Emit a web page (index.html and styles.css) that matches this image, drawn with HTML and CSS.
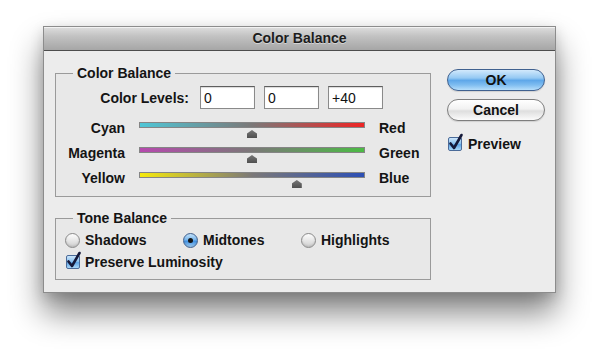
FILE: index.html
```html
<!DOCTYPE html>
<html lang="en">
<head>
    <meta charset="UTF-8">
    <title>Color Balance</title>
    <link rel="stylesheet" href="styles.css">
</head>
<body>

    <div class="page">
        <div class="dialog">
            <div class="titlebar">Color Balance</div>

            <div class="dialog-body">
                <div class="groups">
                    <fieldset class="group balance">
                        <legend>Color Balance</legend>

                        <div class="levels">
                            <span class="levels-label">Color Levels:</span>
                            <input class="level" type="text" value="0">
                            <input class="level" type="text" value="0">
                            <input class="level" type="text" value="+40">
                        </div>

                        <div class="sliders">
                            <span class="from">Cyan</span>
                            <div class="track cyan-red"><span class="thumb" style="left: 50%"></span></div>
                            <span class="to">Red</span>

                            <span class="from">Magenta</span>
                            <div class="track magenta-green"><span class="thumb" style="left: 50%"></span></div>
                            <span class="to">Green</span>

                            <span class="from">Yellow</span>
                            <div class="track yellow-blue"><span class="thumb" style="left: 70%"></span></div>
                            <span class="to">Blue</span>
                        </div>
                    </fieldset>

                    <fieldset class="group tone">
                        <legend>Tone Balance</legend>

                        <div class="radios">
                            <label class="radio"><span class="radio-dot"></span>Shadows</label>
                            <label class="radio"><span class="radio-dot checked"></span>Midtones</label>
                            <label class="radio"><span class="radio-dot"></span>Highlights</label>
                        </div>

                        <label class="check luminosity">
                            <span class="check-box">
                                <svg class="check-mark" width="16" height="18" viewBox="0 0 16 18">
                                    <path d="M2.5 10.5 L6 15 L13.5 2" fill="none" stroke="#15193a" stroke-width="2.6" stroke-linecap="round" stroke-linejoin="round"/>
                                </svg>
                            </span>
                            Preserve Luminosity
                        </label>
                    </fieldset>
                </div>

                <div class="actions">
                    <button class="btn btn-default">OK</button>
                    <button class="btn">Cancel</button>
                    <label class="check preview">
                        <span class="check-box">
                            <svg class="check-mark" width="16" height="18" viewBox="0 0 16 18">
                                <path d="M2.5 10.5 L6 15 L13.5 2" fill="none" stroke="#15193a" stroke-width="2.6" stroke-linecap="round" stroke-linejoin="round"/>
                            </svg>
                        </span>
                        Preview
                    </label>
                </div>
            </div>
        </div>
    </div>

</body>
</html>
```

FILE: styles.css
```css
:root {
    --panel-bg: #ececec;
    --group-bg: #e8e8e8;
    --group-line: #9a9a9a;
    --text-color: #141414;
    --track-mid: #7b7878;
}

html,
body {
    height: 100%;
}

body {
    margin: 0;
    background-color: #fff;
    font-family: "Liberation Sans", Arial, sans-serif;
    font-size: 14px;
    font-weight: bold;
    color: var(--text-color);
}

.page {
    min-height: 353px;
    box-sizing: border-box;
    padding: 26px 0 0 43px;
}

.dialog {
    width: 513px;
    height: 267px;
    box-sizing: border-box;
    border: 1px solid #8c8c8c;
    background-color: var(--panel-bg);
    box-shadow: 0 20px 30px rgba(0,0,0,0.48), 0 4px 12px rgba(0,0,0,0.15);
}

.titlebar {
    height: 23px;
    line-height: 23px;
    text-align: center;
    border-bottom: 1px solid #4d4d4d;
    background: linear-gradient(#dedede, #c2c2c2 40%, #a6a6a6);
    box-shadow: inset 0 1px 0 #f2f2f2;
    color: #1c1c1c;
    text-shadow: 0 1px 0 rgba(255,255,255,0.45);
}

.dialog-body {
    display: flex;
    padding: 14px 10px 0 11px;
}

.group {
    width: 376px;
    min-width: 0;
    box-sizing: border-box;
    margin: 0;
    padding: 0;
    border: 1px solid var(--group-line);
    background-color: var(--group-bg);
}

.group legend {
    margin-left: 17px;
    padding: 0 4px;
    line-height: 16px;
}

.balance {
    padding-bottom: 1px;
}

.tone {
    margin-top: 13px;
    padding-bottom: 9px;
}

/* color levels */

.levels {
    display: flex;
    align-items: center;
    margin-top: 5px;
}

.levels-label {
    width: 133px;
    margin-right: 11px;
    text-align: right;
}

.level {
    width: 55px;
    height: 23px;
    box-sizing: border-box;
    margin: 0 9px 0 0;
    padding: 1px 3px 0;
    border: 1px solid #8a8a8a;
    border-top-color: #5e5e5e;
    box-shadow: inset 0 1px 1px rgba(0,0,0,0.15);
    background-color: #fff;
    font-family: "Liberation Sans", Arial, sans-serif;
    font-size: 14px;
    color: #111;
}

/* sliders */

.sliders {
    display: grid;
    grid-template-columns: 68px 226px auto;
    grid-auto-rows: 25px;
    column-gap: 14px;
    margin-top: 11px;
    padding-left: 1px;
}

.sliders span.from,
.sliders span.to {
    line-height: 16px;
}

.from {
    text-align: right;
}

.track {
    position: relative;
    height: 6px;
    margin-top: 2px;
    box-sizing: border-box;
    border: 1px solid #858585;
}

.cyan-red {
    background: linear-gradient(to right, #4fc6d6, var(--track-mid) 50%, #ee2424);
}

.magenta-green {
    background: linear-gradient(to right, #b64aae, var(--track-mid) 50%, #4cbb45);
}

.yellow-blue {
    background: linear-gradient(to right, #f6ea0c, var(--track-mid) 50%, #2c4fb4);
}

.thumb {
    position: absolute;
    top: 7px;
    width: 10px;
    height: 8px;
    transform: translateX(-50%);
    background: linear-gradient(#777, #505050);
    clip-path: polygon(50% 0, 100% 45%, 100% 100%, 0 100%, 0 45%);
}

/* tone balance */

.radios {
    display: grid;
    grid-template-columns: repeat(3, 118px);
    margin-top: 6px;
    padding-left: 9px;
}

.radio,
.check {
    display: flex;
    align-items: center;
    height: 16px;
}

.radio-dot {
    position: relative;
    width: 15px;
    height: 15px;
    box-sizing: border-box;
    margin-right: 5px;
    border: 1px solid #8a8a8a;
    border-radius: 50%;
    background: linear-gradient(#fdfdfd, #e4e4e4 55%, #cfcfcf);
    box-shadow: inset 0 -1px 2px rgba(0,0,0,0.12);
}

.radio-dot.checked {
    border-color: #3e5f8e;
    background: linear-gradient(#c4e2fa, #78b6ec 45%, #3f8fe0 55%, #a4d3f8);
}

.radio-dot.checked::after {
    content: "";
    position: absolute;
    top: 4px;
    left: 4px;
    width: 5px;
    height: 5px;
    border-radius: 50%;
    background-color: #151515;
}

.check-box {
    position: relative;
    width: 14px;
    height: 14px;
    box-sizing: border-box;
    border: 1px solid #4b6b99;
    border-radius: 2px;
    background: linear-gradient(#cde6fb, #8cc2f0 45%, #5fa5e6 55%, #a9d7f9);
}

.check-mark {
    position: absolute;
    left: -1px;
    top: -5px;
}

.luminosity {
    margin-top: 6px;
    padding-left: 10px;
}

.luminosity .check-box {
    margin-right: 5px;
}

/* buttons */

.actions {
    width: 98px;
    margin: 4px 0 0 16px;
    display: flex;
    flex-direction: column;
}

.btn {
    height: 22px;
    padding: 0;
    border: 1px solid #7e7e7e;
    border-radius: 11px;
    background: linear-gradient(#ffffff, #f2f2f2 45%, #dedede 55%, #fbfbfb);
    font-family: "Liberation Sans", Arial, sans-serif;
    font-size: 14px;
    font-weight: bold;
    color: #111;
    line-height: 20px;
    box-shadow: 0 1px 1px rgba(0,0,0,0.12);
}

.btn + .btn {
    margin-top: 8px;
}

.btn-default {
    border-color: #40618f;
    background: linear-gradient(#d2e9fc, #95c9f3 40%, #5ea7e9 52%, #7fbdf0 75%, #b6defb);
}

.preview {
    margin-top: 15px;
    padding-left: 1px;
}

.preview .check-box {
    margin-right: 6px;
}
```
